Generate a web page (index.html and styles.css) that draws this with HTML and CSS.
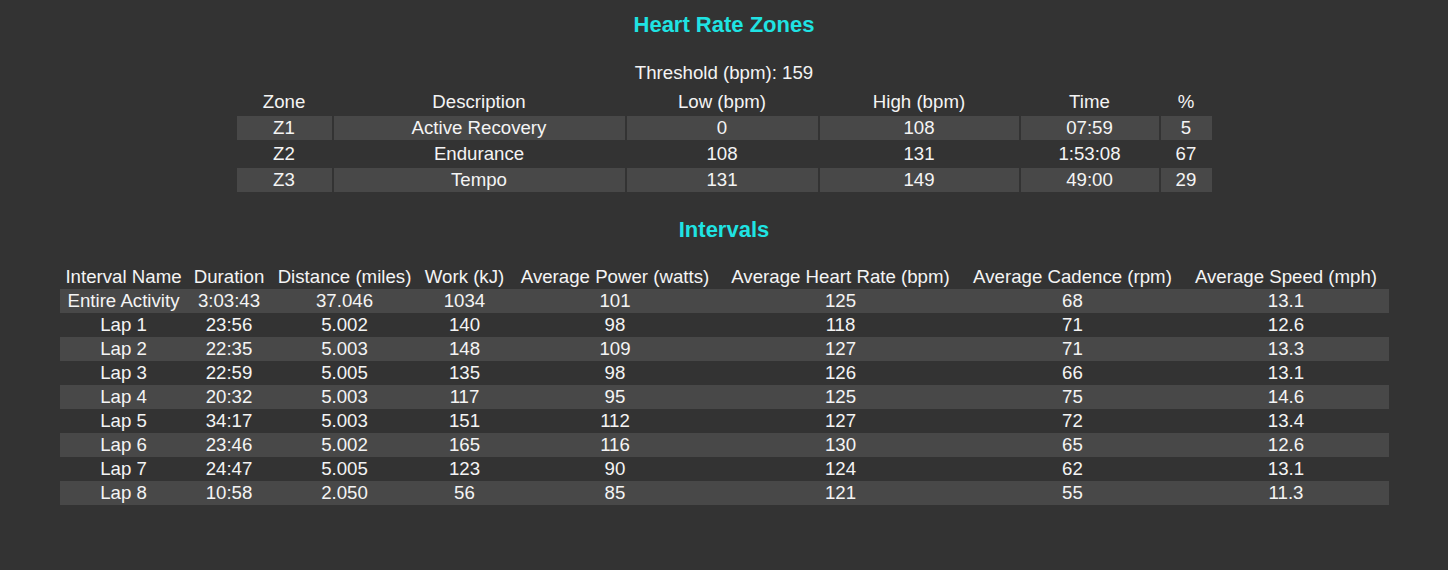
FILE: index.html
```html
<!DOCTYPE html>
<html lang="en">
<head>
<meta charset="utf-8">
<title>Heart Rate Zones</title>
<link rel="stylesheet" href="styles.css">
</head>
<body>
<main class="page">
  <h3 class="section-title title-zones">Heart Rate Zones</h3>
  <p class="threshold">Threshold (bpm): 159</p>
  <table class="zones">
    <colgroup>
      <col class="z-c1"><col class="z-c2"><col class="z-c3"><col class="z-c4"><col class="z-c5"><col class="z-c6">
    </colgroup>
    <thead>
      <tr><th>Zone</th><th>Description</th><th>Low (bpm)</th><th>High (bpm)</th><th>Time</th><th>%</th></tr>
    </thead>
    <tbody>
      <tr class="shade"><td>Z1</td><td>Active Recovery</td><td>0</td><td>108</td><td>07:59</td><td>5</td></tr>
      <tr><td>Z2</td><td>Endurance</td><td>108</td><td>131</td><td>1:53:08</td><td>67</td></tr>
      <tr class="shade"><td>Z3</td><td>Tempo</td><td>131</td><td>149</td><td>49:00</td><td>29</td></tr>
    </tbody>
  </table>

  <h3 class="section-title title-intervals">Intervals</h3>
  <table class="intervals">
    <colgroup>
      <col class="i-c1"><col class="i-c2"><col class="i-c3"><col class="i-c4"><col class="i-c5"><col class="i-c6"><col class="i-c7"><col class="i-c8">
    </colgroup>
    <thead>
      <tr><th>Interval Name</th><th>Duration</th><th>Distance (miles)</th><th>Work (kJ)</th><th>Average Power (watts)</th><th>Average Heart Rate (bpm)</th><th>Average Cadence (rpm)</th><th>Average Speed (mph)</th></tr>
    </thead>
    <tbody>
      <tr class="shade"><td>Entire Activity</td><td>3:03:43</td><td>37.046</td><td>1034</td><td>101</td><td>125</td><td>68</td><td>13.1</td></tr>
      <tr><td>Lap 1</td><td>23:56</td><td>5.002</td><td>140</td><td>98</td><td>118</td><td>71</td><td>12.6</td></tr>
      <tr class="shade"><td>Lap 2</td><td>22:35</td><td>5.003</td><td>148</td><td>109</td><td>127</td><td>71</td><td>13.3</td></tr>
      <tr><td>Lap 3</td><td>22:59</td><td>5.005</td><td>135</td><td>98</td><td>126</td><td>66</td><td>13.1</td></tr>
      <tr class="shade"><td>Lap 4</td><td>20:32</td><td>5.003</td><td>117</td><td>95</td><td>125</td><td>75</td><td>14.6</td></tr>
      <tr><td>Lap 5</td><td>34:17</td><td>5.003</td><td>151</td><td>112</td><td>127</td><td>72</td><td>13.4</td></tr>
      <tr class="shade"><td>Lap 6</td><td>23:46</td><td>5.002</td><td>165</td><td>116</td><td>130</td><td>65</td><td>12.6</td></tr>
      <tr><td>Lap 7</td><td>24:47</td><td>5.005</td><td>123</td><td>90</td><td>124</td><td>62</td><td>13.1</td></tr>
      <tr class="shade"><td>Lap 8</td><td>10:58</td><td>2.050</td><td>56</td><td>85</td><td>121</td><td>55</td><td>11.3</td></tr>
    </tbody>
  </table>
</main>
</body>
</html>
```

FILE: styles.css
```css
* {
  box-sizing: border-box;
}

html, body {
  margin: 0;
  padding: 0;
  background: #333333;
}

body {
  color: #f4f4f4;
  font-family: "Liberation Sans", Arial, sans-serif;
  font-size: 18.67px;
  line-height: 22px;
}

.page {
  display: flex;
  flex-direction: column;
  align-items: center;
  padding: 12px 8px 0;
}

.section-title {
  margin: 0;
  color: #1fe3e3;
  font-size: 22px;
  line-height: 26px;
  font-weight: bold;
  text-align: center;
}

.threshold {
  margin: 24px 0 0;
  text-align: center;
}

table {
  table-layout: fixed;
}

th, td {
  padding: 1px 0;
  text-align: center;
  font-weight: normal;
  white-space: nowrap;
}

.zones {
  margin-top: 4px;
  border-collapse: separate;
  border-spacing: 2px;
  width: 979px;
}

.zones .shade td {
  background: #484848;
}

.z-c1 { width: 95px; }
.z-c2 { width: 291px; }
.z-c3 { width: 191px; }
.z-c4 { width: 199px; }
.z-c5 { width: 138px; }
.z-c6 { width: 51px; }

.title-intervals {
  margin-top: 23px;
}

.intervals {
  margin-top: 22px;
  border-collapse: separate;
  border-spacing: 0;
  width: 1329px;
}

.intervals .shade td {
  background: #484848;
}

.i-c1 { width: 128px; }
.i-c2 { width: 83px; }
.i-c3 { width: 148px; }
.i-c4 { width: 92px; }
.i-c5 { width: 209px; }
.i-c6 { width: 242px; }
.i-c7 { width: 222px; }
.i-c8 { width: 205px; }
```
